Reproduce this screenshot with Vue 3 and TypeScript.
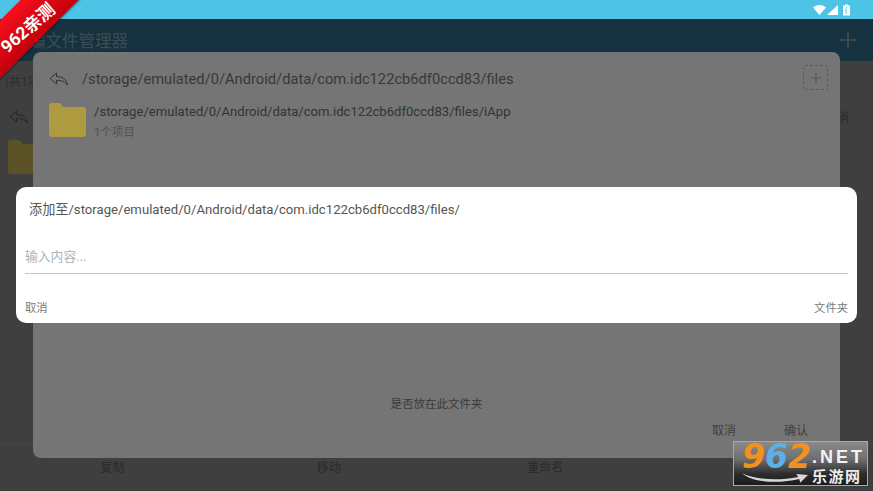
<script setup lang="ts">
const actions: string[] = ['复制', '移动', '重命名', '']
</script>

<template>
  <div class="screen">
    <header class="status">
      <svg class="status-icons" width="37" height="12" viewBox="0 0 37 12">
        <path d="M0 3.500C2 1.800 4.300 1 6.500 1S11 1.800 13 3.500L6.500 11Z" fill="#fff" />
        <path d="M25 1V11H14Z" fill="#fff" />
        <path d="M30 1.500H32V0.500H35V1.500H37V11.500H30Z" fill="#fff" />
        <path d="M33.800 2.500 32.300 6.500H33.500L33 10" fill="none" stroke="#4dc3e6" stroke-width="0.8" />
      </svg>
    </header>
    <div class="appbar">
      <span class="appbar-title">编文件管理器</span>
      <svg width="16" height="16" viewBox="0 0 16 16"><path d="M8 0V16M0 8H16" stroke="#3a4a4e" stroke-width="2" /></svg>
    </div>
    <main class="page">
      <div class="count">(共1项</div>
      <div class="page-row">
        <svg class="back" width="20" height="14" viewBox="0 0 20 14">
          <path d="M7.500 1 1 6.500 7.500 12V8.500C12 8 15.500 9.500 18.500 13 18 7.500 13 4.500 7.500 4.500Z" fill="none" stroke="#222" stroke-width="0.9" />
        </svg>
        <span class="page-right">消</span>
      </div>
      <svg class="page-folder" width="38" height="34" viewBox="0 0 38 34">
        <path d="M0 3Q0 0 3 0H10Q12 0 13 2L14 4H35Q38 4 38 7V31Q38 34 35 34H3Q0 34 0 31Z" fill="#5b5228" />
      </svg>
    </main>
    <footer class="actions">
      <span v-for="(a, i) in actions" :key="i" class="action">{{ a }}</span>
    </footer>

    <section class="panel">
      <div class="panel-head">
        <svg class="panel-back" width="20" height="14" viewBox="0 0 20 14">
          <path d="M7.500 1 1 6.500 7.500 12V8.500C12 8 15.500 9.500 18.500 13 18 7.500 13 4.500 7.500 4.500Z" fill="none" stroke="#2b2b2b" stroke-width="0.9" />
        </svg>
        <span class="panel-path">/storage/emulated/0/Android/data/com.idc122cb6df0ccd83/files</span>
        <span class="add-box">
          <svg width="12" height="12" viewBox="0 0 12 12"><path d="M6 1V11M1 6H11" stroke="#555" stroke-width="1.200" /></svg>
        </span>
      </div>
      <div class="entry">
        <svg class="folder" width="37" height="34" viewBox="0 0 38 34" preserveAspectRatio="none">
          <path d="M0 3Q0 0 3 0H10Q12 0 13 2L14 4H35Q38 4 38 7V31Q38 34 35 34H3Q0 34 0 31Z" fill="#ae9a3f" />
        </svg>
        <div class="entry-text">
          <div class="entry-path">/storage/emulated/0/Android/data/com.idc122cb6df0ccd83/files/iApp</div>
          <div class="entry-sub">1个项目</div>
        </div>
      </div>
      <div class="panel-spacer"></div>
      <div class="panel-question">是否放在此文件夹</div>
      <div class="panel-actions">
        <span>取消</span>
        <span>确认</span>
      </div>
    </section>

    <section class="dialog">
      <div class="dialog-title">添加至/storage/emulated/0/Android/data/com.idc122cb6df0ccd83/files/</div>
      <div class="dialog-input">输入内容...</div>
      <div class="dialog-actions">
        <span>取消</span>
        <span>文件夹</span>
      </div>
    </section>

    <div class="ribbon"><span class="ribbon-text">962亲测</span></div>

    <div class="logo">
      <div class="logo-top">
        <span class="logo-num"><i class="orange">9</i><i class="blue">6</i><i class="orange">2</i></span>
        <span class="logo-net">.NET</span>
      </div>
      <div class="logo-bottom">
        <svg width="66" height="12" viewBox="0 0 68 12">
          <path d="M0 1C14 8 38 9 58 5L56 2 68 3 60 11 59 7C38 12 12 11 0 1Z" fill="#d8d8d8" />
        </svg>
        <span class="logo-cn">乐游网</span>
      </div>
    </div>
  </div>
</template>

<style>
html, body { margin: 0; padding: 0; }
</style>

<style scoped>
.screen {
  position: relative;
  width: 873px;
  height: 491px;
  overflow: hidden;
  display: flex;
  flex-direction: column;
  background: #3f3f3f;
  font-family: Roboto, "Noto Sans CJK SC", sans-serif;
}
.status {
  height: 19px;
  flex: none;
  background: #4dc3e6;
  display: flex;
  justify-content: flex-end;
  align-items: center;
  padding: 1px 23px 0 0;
  box-sizing: border-box;
}
.status-icons { display: block; }
.appbar {
  height: 42px;
  flex: none;
  background: #163240;
  display: flex;
  align-items: center;
  justify-content: space-between;
  padding: 0 17px 0 29px;
  box-sizing: border-box;
}
.appbar-title { color: #3d4d52; font-size: 16.500px; }
.page { flex: 1; padding: 0 0 0 5px; color: #2a2a2a; font-size: 12px; min-height: 0; }
.count { margin-top: 11px; color: #2e2e2e; }
.page-row { display: flex; justify-content: space-between; align-items: center; margin-top: 19px; padding: 0 24px 0 4px; }
.page-right { color: #2a2a2a; }
.page-folder { display: block; margin: 15px 0 0 3px; }
.actions {
  height: 48px;
  flex: none;
  box-sizing: border-box;
  border-top: 1px solid #474747;
  display: grid;
  grid-template-columns: repeat(4, 216.500px);
  justify-items: center;
  padding: 14px 0 0 4px;
  color: #2a2a2a;
  font-size: 12px;
}
.panel {
  position: absolute;
  left: 33px;
  top: 52px;
  width: 807px;
  height: 406px;
  background: #757575;
  border-radius: 8px;
  box-sizing: border-box;
  display: flex;
  flex-direction: column;
  padding: 0 12px 0 16px;
}
.panel-head { display: flex; align-items: center; height: 53px; }
.panel-back { flex: none; margin-right: 13px; }
.panel-path { flex: 1; color: #383838; font-size: 14.700px; }
.add-box {
  flex: none;
  width: 25px;
  height: 25px;
  margin-bottom: 2px;
  box-sizing: border-box;
  border: 1px dashed #5c5c5c;
  border-radius: 2px;
  display: flex;
  align-items: center;
  justify-content: center;
}
.entry { display: flex; align-items: flex-start; margin-top: -2px; }
.folder { flex: none; margin-right: 8px; }
.entry-text { margin-top: 0; }
.entry-path { color: #333; font-size: 13.100px; line-height: 18px; }
.entry-sub { color: #515151; font-size: 11.500px; line-height: 16px; margin-top: 3px; }
.panel-spacer { flex: 1; }
.panel-question { text-align: center; color: #3a3a3a; font-size: 11.500px; line-height: 14px; margin-bottom: 12px; padding-right: 4px; }
.panel-actions { display: flex; justify-content: flex-end; gap: 48px; color: #3f3f3f; font-size: 12px; line-height: 16px; padding: 0 20px 19px 0; }
.dialog {
  position: absolute;
  left: 16px;
  top: 187px;
  width: 841px;
  height: 136px;
  background: #fff;
  border-radius: 10px;
  box-sizing: border-box;
  padding: 14px 9px 0;
}
.dialog-title { color: #555; font-size: 13.150px; line-height: 17px; padding-left: 4px; }
.dialog-input {
  color: #b0b0b0;
  font-size: 12.800px;
  line-height: 16px;
  height: 36px;
  padding-top: 11px;
  box-sizing: border-box;
  border-bottom: 1px solid #c6c6c6;
  margin-top: 20px;
}
.dialog-actions { display: flex; justify-content: space-between; margin-top: 27px; color: #7a7a7a; font-size: 11.300px; line-height: 16px; }
.ribbon {
  position: absolute;
  left: -55.500px;
  top: 4px;
  width: 160px;
  height: 41px;
  box-sizing: border-box;
  padding-top: 6px;
  transform: rotate(-45deg);
  background: linear-gradient(#f5101a, #c4000c);
  color: #fff;
  font-size: 17.500px;
  font-weight: 700;
  display: flex;
  align-items: center;
  justify-content: center;
  box-shadow: 0 1px 2px rgba(0, 0, 0, 0.4);
}
.ribbon-text { display: inline-block; transform: rotate(4deg); white-space: nowrap; }
.logo {
  position: absolute;
  left: 733px;
  top: 441px;
  width: 135px;
  height: 45px;
  box-sizing: border-box;
  border: 1px solid #a8a8a8;
  background: linear-gradient(#8a8a8a 0%, #6e6e6e 40%, #2c2c2c 75%, #1c1c1c 100%);
  padding: 2px 3px 0 8px;
}
.logo-top { display: flex; align-items: center; height: 26px; gap: 1px; }
.logo-num { font-family: "DejaVu Sans", sans-serif; font-size: 33px; font-weight: 700; line-height: 26px; }
.logo-num i { font-style: italic; }
.orange { color: #f2921e; }
.blue { color: #5cb0e6; }
.logo-net { color: #f2f2f2; font-family: "Liberation Sans", sans-serif; font-weight: 700; font-size: 18px; letter-spacing: 3px; line-height: 20px; }
.logo-bottom { display: flex; align-items: center; gap: 4px; }
.logo-bottom svg { flex: none; }
.logo-cn { color: #eee; font-size: 15px; font-weight: 700; letter-spacing: 1.500px; line-height: 15px; white-space: nowrap; }
</style>
